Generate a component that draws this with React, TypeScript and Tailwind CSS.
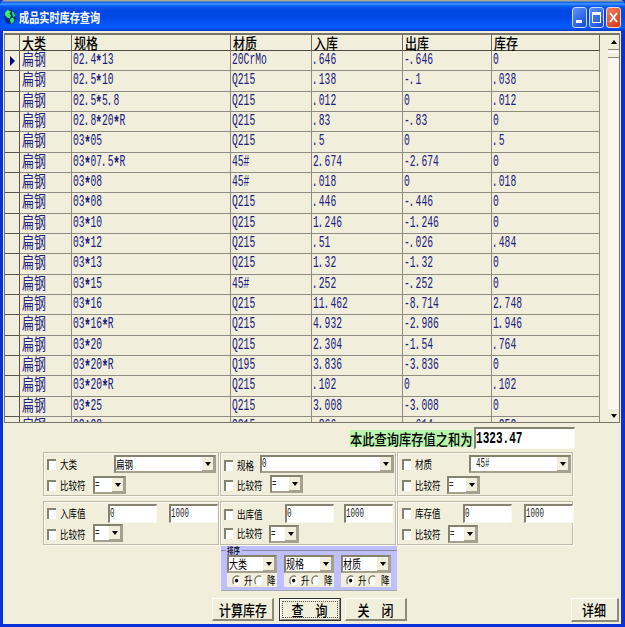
import React from "react";

const MONO = "font-['Liberation_Mono','Noto_Sans_CJK_SC',monospace]";
const CJK = "font-['Noto_Sans_CJK_SC',sans-serif]";

const rows: string[][] = [
  ["02.4*13", "20CrMo", ".646", "-.646", "0"],
  ["02.5*10", "Q215", ".138", "-.1", ".038"],
  ["02.5*5.8", "Q215", ".012", "0", ".012"],
  ["02.8*20*R", "Q215", ".83", "-.83", "0"],
  ["03*05", "Q215", ".5", "0", ".5"],
  ["03*07.5*R", "45#", "2.674", "-2.674", "0"],
  ["03*08", "45#", ".018", "0", ".018"],
  ["03*08", "Q215", ".446", "-.446", "0"],
  ["03*10", "Q215", "1.246", "-1.246", "0"],
  ["03*12", "Q215", ".51", "-.026", ".484"],
  ["03*13", "Q215", "1.32", "-1.32", "0"],
  ["03*15", "45#", ".252", "-.252", "0"],
  ["03*16", "Q215", "11.462", "-8.714", "2.748"],
  ["03*16*R", "Q215", "4.932", "-2.986", "1.946"],
  ["03*20", "Q215", "2.304", "-1.54", ".764"],
  ["03*20*R", "Q195", "3.836", "-3.836", "0"],
  ["03*20*R", "Q215", ".102", "0", ".102"],
  ["03*25", "Q215", "3.008", "-3.008", "0"],
  ["03*28", "Q215", ".866", "-.614", ".252"],
];

const SUNKEN =
  "bg-white border-t-2 border-l-2 border-t-[#85826f] border-l-[#85826f] border-r border-b border-r-[#faf9f0] border-b-[#faf9f0]";
const RAISED =
  "bg-[#f1eedb] border-t border-l border-t-white border-l-white border-r-2 border-b-2 border-r-[#8d8a78] border-b-[#8d8a78]";

function Arrow({ up = false }: { up?: boolean }) {
  return (
    <svg width="6" height="4" viewBox="0 0 6 4" className="block shrink-0">
      <path d={up ? "M3 0 6 4H0Z" : "M0 0H6L3 4Z"} fill="#000" />
    </svg>
  );
}

function Label({ children }: { children: React.ReactNode }) {
  return (
    <span className={`${CJK} block origin-left scale-x-[0.74] whitespace-nowrap text-[11.5px] leading-[12px] text-black`}>
      {children}
    </span>
  );
}

function Digits({ children }: { children: React.ReactNode }) {
  return (
    <span className={`${MONO} block origin-left scale-x-[0.6] whitespace-nowrap text-[12.5px] leading-[12px] text-[#222]`}>
      {children}
    </span>
  );
}

// Grid text: asterisks sit mid-height and points hug the left of their cell.
function CellText({ text }: { text: string }) {
  return (
    <span className={`${MONO} block origin-left scale-x-[0.604] text-[16px] leading-[18px] whitespace-nowrap`}>
      {text.split(/([*.])/).map((part, i) =>
        part === "*" ? (
          <span key={i} className="inline-block translate-y-[2px] scale-[1.2] font-bold">*</span>
        ) : part === "." ? (
          <span key={i} className="inline-block -translate-x-[2px]">.</span>
        ) : (
          part
        ),
      )}
    </span>
  );
}

function Combo({ size, children }: { size: string; children?: React.ReactNode }) {
  return (
    <div className={`${size} flex shrink-0 justify-between border-2 border-t-[#85826f] border-l-[#85826f] border-r-[#a5a18e] border-b-[#a5a18e] bg-white`}>
      <div className="flex w-0 items-center">{children}</div>
      <div className="flex w-[12px] shrink-0 items-center justify-center border-r border-b border-[#a5a18e] bg-[#f1eedb]">
        <Arrow />
      </div>
    </div>
  );
}

function Check({ label, place, labelWidth }: { label: string; place: string; labelWidth: string }) {
  return (
    <div className={`${place} flex shrink-0 items-center`}>
      <div className="h-[11px] w-[9px] shrink-0 border-t-2 border-l-2 border-[#85826f] bg-white" />
      <div className={`${labelWidth} ml-[4px] flex shrink-0 items-center`}>
        <Label>{label}</Label>
      </div>
    </div>
  );
}

function Box({ place, text }: { place: string; text: string }) {
  return (
    <div className={`${place} ${SUNKEN} flex h-[19px] w-[49px] shrink-0 items-center`}>
      <Digits>{text}</Digits>
    </div>
  );
}

function Group({ children }: { children: React.ReactNode }) {
  return (
    <div className="flex h-[44px] w-[176px] shrink-0 flex-col border border-[#bdbaaa] shadow-[inset_1px_1px_0_#fcfbf3,1px_1px_0_#fcfbf3]">
      {children}
    </div>
  );
}

function Row({ children }: { children: React.ReactNode }) {
  return <div className="flex h-[21px] items-start">{children}</div>;
}

function Sort({ label }: { label: string }) {
  return (
    <div className="flex w-[50px] shrink-0 flex-col">
      <Combo size="h-[18px] w-[50px]">
        <span className={`${CJK} block origin-left scale-x-[0.75] whitespace-nowrap text-[12px] leading-[14px]`}>{label}</span>
      </Combo>
      <div className="flex h-[14px] items-center bg-[#f1eedb] pl-[5px]">
        <Radio on />
        <div className="ml-[3px] w-[10px]"><Label>升</Label></div>
        <Radio />
        <div className="ml-[4px] w-[9px]"><Label>降</Label></div>
      </div>
    </div>
  );
}

function Radio({ on = false }: { on?: boolean }) {
  return (
    <svg width="9" height="11" viewBox="0 0 9 11" className="block shrink-0">
      <ellipse cx="4.5" cy="5.5" rx="3.8" ry="4.6" fill="#fff" />
      <path d="M7 1.6C4.5-.2.8 1.7.8 5.5c0 1.5.4 2.6 1.1 3.4" fill="none" stroke="#77735f" strokeWidth="1.2" />
      {on && <ellipse cx="4.6" cy="5.6" rx="1.6" ry="1.9" fill="#000" />}
    </svg>
  );
}

function Caption({ children }: { children: React.ReactNode }) {
  return (
    <span className={`${CJK} block scale-x-[0.8] whitespace-pre text-[15px] leading-[17px] font-medium text-black`}>{children}</span>
  );
}

const COLS = "grid grid-cols-[15px_52px_159px_81px_91px_89px_108px]";

export default function App() {
  return (
    <div className={`${CJK} flex h-[627px] w-[625px] flex-col overflow-hidden bg-[#0831d9]`}>
      {/* title bar */}
      <div className="flex h-[31px] shrink-0 items-center rounded-t-[5px] bg-[linear-gradient(180deg,#a9a78f_0px,#a9a78f_1px,#0a5be8_2px,#3c97ff_4px,#0a5cf0_6px,#0348e4_10px,#0349e6_18px,#0358fb_24px,#0359fd_28px,#0239c8_31px)] pt-[3px] pl-[4px]">
        <svg width="12" height="16" viewBox="0 0 12 16" className="shrink-0">
          <ellipse cx="6" cy="8" rx="5.7" ry="7.3" fill="#0a2a8c" />
          <path d="M.8 4 3.5.8 7 2.6 5.4 4.4 7 6.4 5.6 9.6 3 8.4 1.4 6.8Z" fill="#3cf05a" />
          <path d="M8 2 10 3.6 11.4 7 9.4 8 8.4 5.6ZM6.4 9.6 8.6 8.6 10.6 10.4 9.2 13.4 7.6 15 6 12Z" fill="#30e254" />
        </svg>
        <div className="ml-[3px] w-[400px]">
          <span className="block origin-left scale-x-[0.78] text-[13px] leading-[16px] font-bold whitespace-nowrap text-white">成品实时库存查询</span>
        </div>
        <div className="ml-auto flex gap-[2px] pr-[4px]">
          <div className="flex h-[21px] w-[15px] items-end rounded-[3px] border border-[#c9dafb] bg-[linear-gradient(135deg,#5c93fb,#1549d8)] pb-[4px] pl-[3px]">
            <div className="h-[3px] w-[6px] bg-white" />
          </div>
          <div className="flex h-[21px] w-[15px] items-center justify-center rounded-[3px] border border-[#c9dafb] bg-[linear-gradient(135deg,#5c93fb,#1549d8)]">
            <div className="h-[11px] w-[9px] border border-t-[3px] border-white" />
          </div>
          <div className="flex h-[21px] w-[15px] items-center justify-center rounded-[3px] border border-[#f0d5d0] bg-[linear-gradient(135deg,#f0805c,#d9350f)]">
            <svg width="9" height="11" viewBox="0 0 9 11">
              <path d="M1 1 8 10M8 1 1 10" stroke="#fff" strokeWidth="1.9" />
            </svg>
          </div>
        </div>
      </div>

      {/* window body */}
      <div className="mr-[4px] ml-[3px] flex h-[593px] shrink-0 flex-col bg-[#f1eedb]">
        {/* data grid */}
        <div className="mt-[2px] ml-[1px] flex h-[390px] w-[616px] shrink-0 overflow-hidden border border-t-2 border-[#77746a]">
          <div className="w-[595px] shrink-0">
            <div className={`${COLS} h-[16px] border-b border-[#4d4b43]`}>
              {["", "大类", "规格", "材质", "入库", "出库", "库存"].map((h, i) => (
                <div key={i} className="flex items-start border-r border-[#6c6a60] pl-[2px]">
                  <span className="block origin-left scale-x-[0.8] text-[15px] leading-[16px] font-medium whitespace-nowrap text-black">{h}</span>
                </div>
              ))}
            </div>
            {rows.map((r, n) => (
              <div key={n} className={`${COLS} h-[20.34px] text-[#202080]`}>
                <div className="flex items-center border-r border-b border-[#57554c] pl-[5px]">
                  {n === 0 && (
                    <svg width="5" height="10" viewBox="0 0 5 10">
                      <path d="M0 0 5 5 0 10Z" fill="#000080" />
                    </svg>
                  )}
                </div>
                <div className="border-r border-b border-[#8f8d83] pl-[2px]">
                  <span className="block origin-left scale-x-[0.77] text-[15.5px] leading-[15px] whitespace-nowrap">扁钢</span>
                </div>
                {r.map((c, i) => (
                  <div key={i} className="border-r border-b border-[#8f8d83] pl-px">
                    <CellText text={c} />
                  </div>
                ))}
              </div>
            ))}
          </div>
          <div className="ml-[8px] flex w-[11px] shrink-0 flex-col bg-[#f8f7ed]">
            <div className="flex h-[15px] items-center justify-center border-b border-[#8d8a78] bg-[#f1eedb]"><Arrow up /></div>
            <div className="mt-[2px] h-[6px] border-t border-b border-t-white border-b-[#8d8a78] bg-[#f1eedb]" />
            <div className="mt-auto flex h-[14px] items-center justify-center border-t border-white bg-[#f1eedb]"><Arrow /></div>
          </div>
        </div>

        {/* total */}
        <div className="mt-[4px] ml-[347px] flex h-[22px] shrink-0 items-center">
          <div className="flex h-[17px] w-[123px] shrink-0 items-center bg-[#b9f5ac]">
            <span className="block origin-left scale-x-[0.8] text-[15.3px] leading-[15px] font-medium whitespace-nowrap text-black">本此查询库存值之和为</span>
          </div>
          <div className={`${SUNKEN} ml-[1px] flex h-[22px] w-[101px] items-center`}>
            <span className={`${MONO} block origin-left scale-x-[0.67] text-[16.5px] leading-[16px] font-bold text-black`}>1323.47</span>
          </div>
        </div>

        {/* filters */}
        <div className="mt-[3px] ml-[40px] flex shrink-0 gap-[1px]">
          <Group>
            <Row>
              <Check label="大类" place="ml-[3px] mt-[5px]" labelWidth="w-[54px]" />
              <Combo size="mt-[2px] h-[18px] w-[102px]"><Label>扁钢</Label></Combo>
            </Row>
            <Row>
              <Check label="比较符" place="ml-[3px] mt-[5px]" labelWidth="w-[33px]" />
              <Combo size="mt-[2px] h-[18px] w-[33px]"><Digits>=</Digits></Combo>
            </Row>
          </Group>
          <Group>
            <Row>
              <Check label="规格" place="ml-[3px] mt-[6px]" labelWidth="w-[23px]" />
              <Combo size="mt-[2px] h-[18px] w-[134px]"><Digits>0</Digits></Combo>
            </Row>
            <Row>
              <Check label="比较符" place="ml-[3px] mt-[5px]" labelWidth="w-[33px]" />
              <Combo size="mt-[1px] h-[18px] w-[33px]"><Digits>=</Digits></Combo>
            </Row>
          </Group>
          <Group>
            <Row>
              <Check label="材质" place="ml-[4px] mt-[5px]" labelWidth="w-[54px]" />
              <Combo size="mt-[2px] h-[18px] w-[102px]"><div className="pl-[5px]"><Digits>45#</Digits></div></Combo>
            </Row>
            <Row>
              <Check label="比较符" place="ml-[4px] mt-[5px]" labelWidth="w-[32px]" />
              <Combo size="mt-[2px] h-[18px] w-[33px]"><Digits>=</Digits></Combo>
            </Row>
          </Group>
        </div>
        <div className="mt-[5px] ml-[40px] flex shrink-0 gap-[1px]">
          <Group>
            <Row>
              <Check label="入库值" place="ml-[3px] mt-[5px]" labelWidth="w-[48px]" />
              <Box place="mt-[2px]" text="0" />
              <Box place="mt-[2px] ml-[12px]" text="1000" />
            </Row>
            <Row>
              <Check label="比较符" place="ml-[3px] mt-[5px]" labelWidth="w-[33px]" />
              <Combo size="mt-[1px] h-[18px] w-[30px]"><Digits>=</Digits></Combo>
            </Row>
          </Group>
          <Group>
            <Row>
              <Check label="出库值" place="ml-[3px] mt-[6px]" labelWidth="w-[48px]" />
              <Box place="mt-[2px]" text="0" />
              <Box place="mt-[2px] ml-[10px]" text="1000" />
            </Row>
            <Row>
              <Check label="比较符" place="ml-[3px] mt-[4px]" labelWidth="w-[32px]" />
              <Combo size="mt-[2px] h-[18px] w-[30px]"><Digits>=</Digits></Combo>
            </Row>
          </Group>
          <Group>
            <Row>
              <Check label="库存值" place="ml-[4px] mt-[5px]" labelWidth="w-[48px]" />
              <Box place="mt-[2px]" text="0" />
              <Box place="mt-[2px] ml-[12px]" text="1000" />
            </Row>
            <Row>
              <Check label="比较符" place="ml-[4px] mt-[5px]" labelWidth="w-[33px]" />
              <Combo size="mt-[2px] h-[18px] w-[30px]"><Digits>=</Digits></Combo>
            </Row>
          </Group>
        </div>

        {/* sort panel */}
        <div className="mt-[1px] ml-[218px] flex h-[45px] w-[176px] shrink-0 flex-col border-b border-[#a6a6b4] bg-[#bfbfff]">
          <div className="flex h-[9px] shrink-0 items-center overflow-hidden">
            <div className="h-px w-[5px] bg-[#8888a8]" />
            <div className="w-[16px] pl-[1px]">
              <span className="block origin-left scale-x-[0.72] text-[9px] leading-[9px] font-medium whitespace-nowrap text-black">排序</span>
            </div>
            <div className="h-px grow bg-[#8888a8]" />
          </div>
          <div className="flex gap-[7px] pl-[6px]">
            <Sort label="大类" />
            <Sort label="规格" />
            <Sort label="材质" />
          </div>
        </div>

        {/* buttons */}
        <div className="mt-[7px] ml-[209px] flex h-[24px] shrink-0 items-start">
          <div className={`${RAISED} flex h-[23px] w-[62px] items-center justify-center`}><Caption>计算库存</Caption></div>
          <div className="ml-[5px] flex h-[23px] w-[62px] border border-[#333] bg-[#f1eedb]">
            <div className="flex grow border border-t-white border-l-white border-r-[#8d8a78] border-b-[#8d8a78] p-px">
              <div className="flex grow items-center justify-center border border-dotted border-[#555]"><Caption>查　询</Caption></div>
            </div>
          </div>
          <div className={`${RAISED} ml-[4px] flex h-[23px] w-[62px] items-center justify-center`}><Caption>关　闭</Caption></div>
          <div className={`${RAISED} ml-[164px] flex h-[24px] w-[48px] items-center justify-center`}><Caption>详细</Caption></div>
        </div>
      </div>
    </div>
  );
}
